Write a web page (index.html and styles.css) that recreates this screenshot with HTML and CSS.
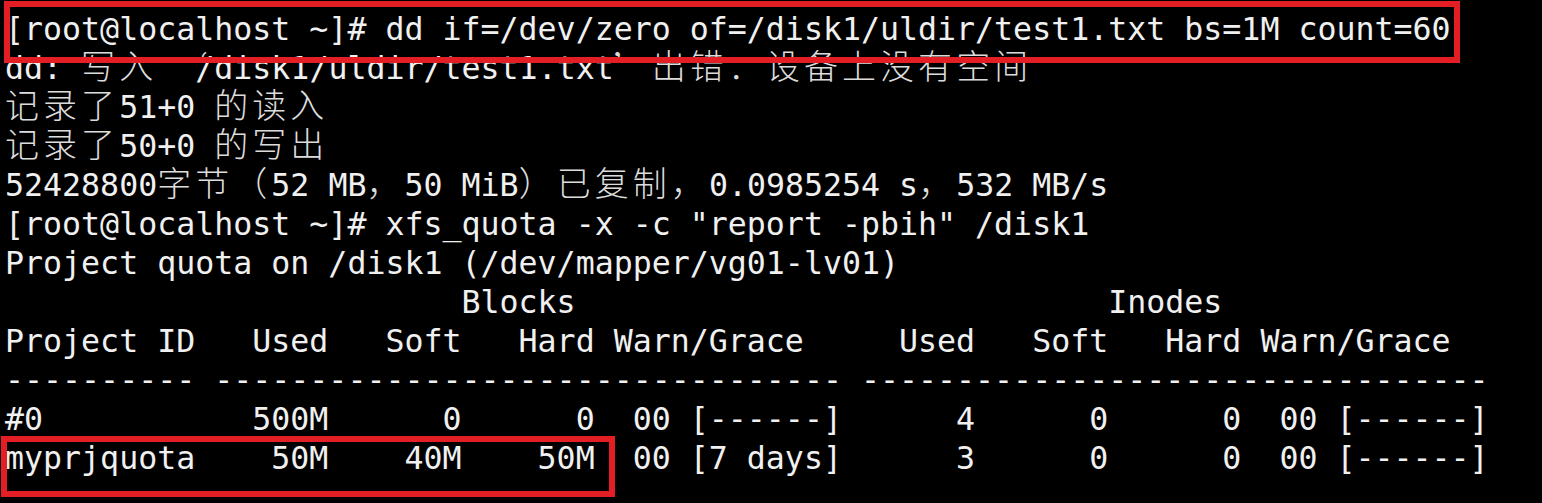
FILE: index.html
```html
<!DOCTYPE html>
<html lang="zh-CN">
<head>
<meta charset="utf-8">
<title>xfs_quota</title>
<link rel="stylesheet" href="styles.css">
</head>
<body>
<div class="term">
<div class="line">[root@localhost ~]# dd if=/dev/zero of=/disk1/uldir/test1.txt bs=1M count=60</div>
<div class="line">dd: <span class="z">写入</span> <span class="q">‘</span>/disk1/uldir/test1.txt<span class="q">’</span> <span class="z">出错：设备上没有空间</span></div>
<div class="line"><span class="z">记录了</span>51+0 <span class="z">的读入</span></div>
<div class="line"><span class="z">记录了</span>50+0 <span class="z">的写出</span></div>
<div class="line">52428800<span class="z">字节（</span>52 MB<span class="z">，</span>50 MiB<span class="z">）已复制，</span>0.0985254 s<span class="z">，</span>532 MB/s</div>
<div class="line">[root@localhost ~]# xfs_quota -x -c "report -pbih" /disk1</div>
<div class="line">Project quota on /disk1 (/dev/mapper/vg01-lv01)</div>
<div class="line">                        Blocks                            Inodes</div>
<div class="line">Project ID   Used   Soft   Hard Warn/Grace     Used   Soft   Hard Warn/Grace</div>
<div class="line">---------- --------------------------------- ---------------------------------</div>
<div class="line">#0           500M      0      0  00 [------]      4      0      0  00 [------]</div>
<div class="line">myprjquota    50M    40M    50M  00 [7 days]      3      0      0  00 [------]</div>
<div class="mark mark-cmd"></div>
<div class="mark mark-row"></div>
</div>
</body>
</html>
```

FILE: styles.css
```css
html, body {
  margin: 0;
  padding: 0;
  background: #000;
}

.term {
  position: relative;
  width: 1542px;
  height: 503px;
  box-sizing: border-box;
  padding: 10px 0 0 5px;
  background: #000;
  color: #f0f0f0;
  font-family: "DejaVu Sans Mono", "Noto Sans CJK SC", monospace;
  font-size: 31.6px;
  line-height: 39px;
  overflow: hidden;
}

.line {
  height: 39px;
  white-space: pre;
}

.z {
  font-family: "Noto Sans CJK SC", sans-serif;
  font-size: 34px;
  font-weight: 300;
  letter-spacing: 4.05px;
  line-height: 0;
  color: #dcdcdc;
}

.q {
  display: inline-block;
  width: 19.02px;
  font-family: "Noto Sans CJK SC", sans-serif;
  line-height: 0;
  color: #dcdcdc;
}

.mark {
  position: absolute;
  border: 6px solid #e31e24;
  box-sizing: border-box;
}

.mark-cmd {
  left: 4px;
  top: 1px;
  width: 1456px;
  height: 62px;
}

.mark-row {
  left: 1px;
  top: 436px;
  width: 614px;
  height: 61px;
}
```
